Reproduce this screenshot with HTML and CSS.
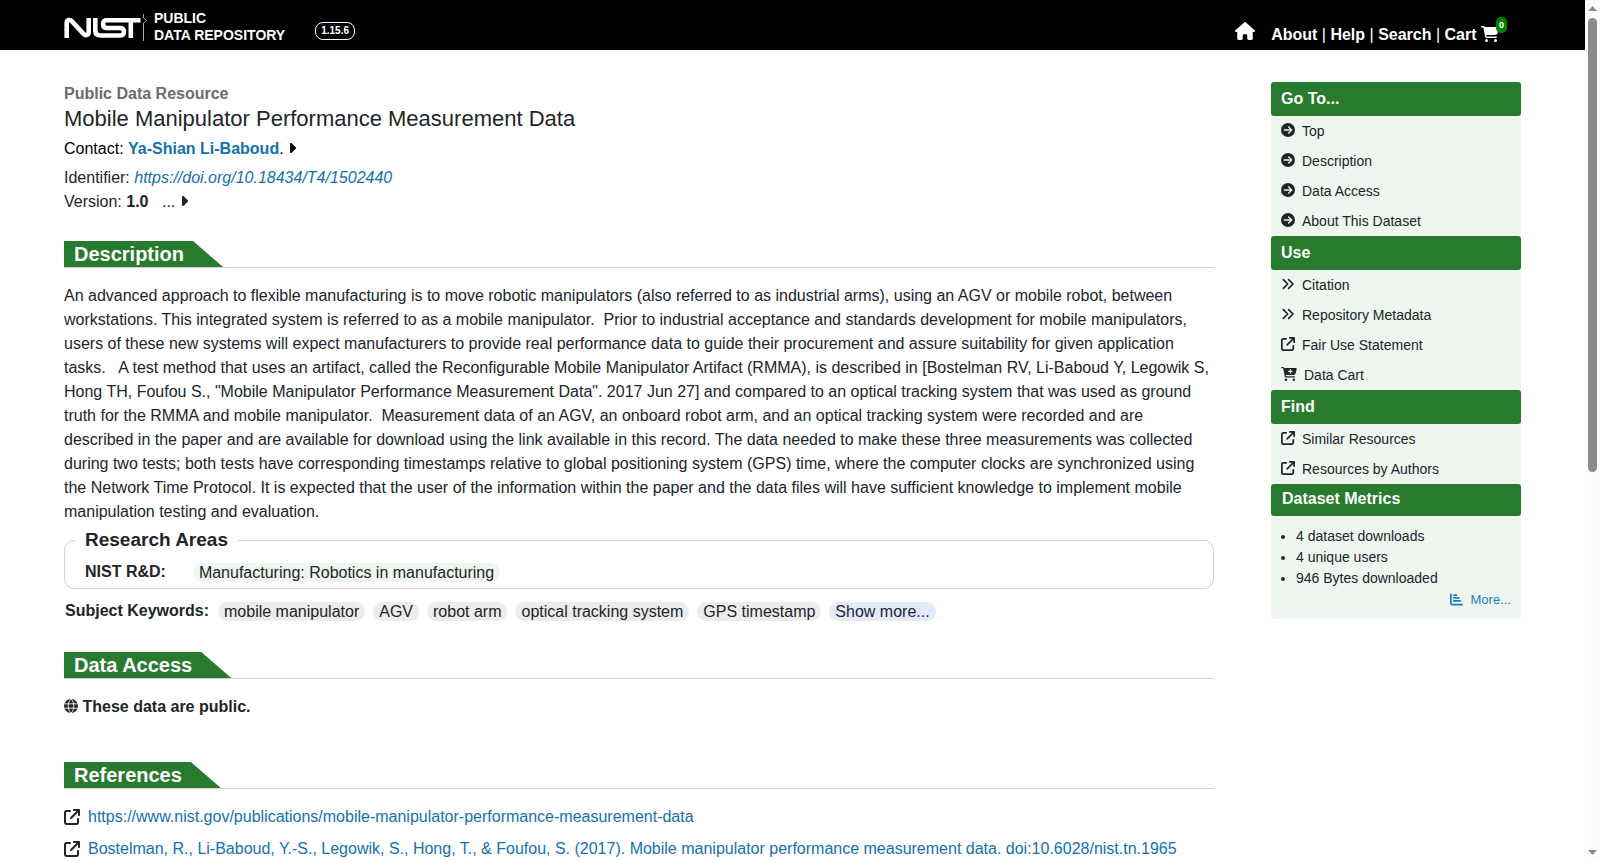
FILE: index.html
```
<!DOCTYPE html>
<html lang="en">
<head>
  <meta charset="UTF-8">
  <meta name="viewport" content="width=device-width, initial-scale=1.0">
  <title>Mobile Manipulator Performance Measurement Data</title>
  <link rel="stylesheet" href="styles.css">
</head>
<body>
  <!-- shared icons -->
  <svg class="icon-defs" aria-hidden="true">
    <symbol id="i-home" viewBox="0 0 576 512"><path d="M575.8 255.5c0 18-15 32.1-32 32.1h-32l.7 160.2c0 2.700-.2 5.400-.5 8.100V472c0 22.100-17.900 40-40 40H392c-22.100 0-40-17.900-40-40V384c0-17.700-14.300-32-32-32H256c-17.700 0-32 14.300-32 32v88c0 22.100-17.900 40-40 40H104c-22.100 0-40-17.900-40-40V287.600H32c-18 0-32-14-32-32.100c0-9 3-17 10-24L266.400 8c7-7 15-8 22-8s15 2 21 7L564.800 231.500c8 7 12 15 11 24z"/></symbol>
    <symbol id="i-cart" viewBox="0 0 576 512"><path d="M0 24C0 10.7 10.7 0 24 0H69.5c22 0 41.5 12.8 50.6 32h411c26.3 0 45.5 25 38.6 50.4l-41 152.3c-8.5 31.4-37 53.3-69.5 53.3H170.7l5.4 28.5c2.2 11.3 12.1 19.5 23.6 19.5H488c13.3 0 24 10.7 24 24s-10.7 24-24 24H199.7c-34.6 0-64.3-24.6-70.7-58.5L77.4 54.5c-.7-3.8-4-6.5-7.9-6.5H24C10.7 48 0 37.3 0 24zM128 464a48 48 0 1 1 96 0 48 48 0 1 1 -96 0zm336-48a48 48 0 1 1 0 96 48 48 0 1 1 0-96z"/></symbol>
    <symbol id="i-cart-plus" viewBox="0 0 576 512"><path fill-rule="evenodd" d="M0 24C0 10.7 10.7 0 24 0H69.5c22 0 41.5 12.8 50.6 32h411c26.3 0 45.5 25 38.6 50.4l-41 152.3c-8.5 31.4-37 53.3-69.5 53.3H170.7l5.4 28.5c2.2 11.3 12.1 19.5 23.6 19.5H488c13.3 0 24 10.7 24 24s-10.7 24-24 24H199.7c-34.6 0-64.3-24.6-70.7-58.5L77.4 54.5c-.7-3.8-4-6.5-7.9-6.5H24C10.7 48 0 37.3 0 24zM128 464a48 48 0 1 1 96 0 48 48 0 1 1 -96 0zm336-48a48 48 0 1 1 0 96 48 48 0 1 1 0-96zM252 160c0 11 9 20 20 20h44v44c0 11 9 20 20 20s20-9 20-20V180h44c11 0 20-9 20-20s-9-20-20-20H356V96c0-11-9-20-20-20s-20 9-20 20v44H272c-11 0-20 9-20 20z"/></symbol>
    <symbol id="i-arrow" viewBox="0 0 512 512"><path fill-rule="evenodd" d="M0 256a256 256 0 1 0 512 0A256 256 0 1 0 0 256zM297 385c-9.4 9.4-24.6 9.4-33.9 0s-9.4-24.6 0-33.9l71-71L120 280c-13.3 0-24-10.7-24-24s10.7-24 24-24l214.1 0-71-71c-9.4-9.4-9.4-24.6 0-33.9s24.6-9.4 33.9 0L409 239c9.4 9.4 9.4 24.6 0 33.9L297 385z"/></symbol>
    <symbol id="i-angles" viewBox="0 0 512 512"><path fill="none" stroke="currentColor" stroke-width="64" stroke-linecap="round" stroke-linejoin="round" d="M86 96l160 160L86 416M278 96l160 160-160 160"/></symbol>
    <symbol id="i-external" viewBox="0 0 512 512"><path d="M320 0c-17.7 0-32 14.3-32 32s14.3 32 32 32h82.7L201.4 265.4c-12.5 12.5-12.5 32.8 0 45.3s32.8 12.5 45.3 0L448 109.3V192c0 17.7 14.3 32 32 32s32-14.3 32-32V32c0-17.7-14.3-32-32-32H320zM80 32C35.8 32 0 67.8 0 112V432c0 44.2 35.8 80 80 80H400c44.2 0 80-35.8 80-80V320c0-17.7-14.3-32-32-32s-32 14.3-32 32V432c0 8.8-7.2 16-16 16H80c-8.8 0-16-7.2-16-16V112c0-8.8 7.2-16 16-16H192c17.7 0 32-14.3 32-32s-14.3-32-32-32H80z"/></symbol>
    <symbol id="i-caret" viewBox="0 0 256 512"><path d="M246.6 278.6c12.5-12.5 12.5-32.8 0-45.3l-128-128c-9.2-9.2-22.9-11.9-34.9-6.9s-19.8 16.6-19.8 29.6l0 256c0 12.9 7.8 24.6 19.8 29.6s25.7 2.2 34.9-6.9l128-128z"/></symbol>
    <symbol id="i-globe" viewBox="0 0 512 512"><circle cx="256" cy="256" r="256"/><path fill="none" stroke="#fff" stroke-width="32" d="M10 176h492M10 336h492M256 0C120 110 120 402 256 512M256 0c136 110 136 402 0 512"/></symbol>
    <symbol id="i-chart" viewBox="0 0 512 512"><path fill="none" stroke="currentColor" stroke-width="68" stroke-linecap="round" stroke-linejoin="round" d="M34 50v354q0 56 56 56h388M150 80h104M150 196h196M150 312h256"/></symbol>
  </svg>

  <div class="page">
    <header class="topbar">
      <a class="brand" href="#top" aria-label="NIST Public Data Repository">
        <svg class="logo" viewBox="0 0 84 28" aria-hidden="true">
          <g fill="none" stroke="#fff" stroke-width="4.600">
            <path d="M2.700 25V10C2.700 6.500 6 6.200 8 8.300L19.500 20.800C22 23.300 24.700 22 24.700 19V5"/>
            <path d="M31.300 5V17.500Q31.300 22.500 36.500 22.500H55.500Q60 22.500 60 18.700T55.500 15H43Q39 15 39 11T43 7.200H76.500M66.800 7.200V25"/>
          </g>
          <path fill="none" stroke="#aaa" d="M79.500 1V5L82.500 7.500L79.500 10V28"/>
        </svg>
        <span class="brand-text">PUBLIC<br>DATA REPOSITORY</span>
      </a>
      <span class="version">1.15.6</span>
      <nav class="topnav">
        <a class="home" href="#home" aria-label="Home"><svg class="icon"><use href="#i-home"/></svg></a>
        <a href="#about">About</a> | <a href="#help">Help</a> | <a href="#search">Search</a> |
        <a class="cart" href="#cart">Cart <svg class="icon"><use href="#i-cart"/></svg><span class="badge">0</span></a>
      </nav>
    </header>

    <div class="content" id="top">
      <main class="main">
        <div class="kind">Public Data Resource</div>
        <h1>Mobile Manipulator Performance Measurement Data</h1>
        <div class="contact">Contact: <a href="#contact"><b>Ya-Shian Li-Baboud</b></a>. <button class="expand" aria-label="Show contact details"><svg class="icon caret"><use href="#i-caret"/></svg></button></div>
        <div>Identifier: <a href="#doi"><i>https://doi.org/10.18434/T4/1502440</i></a></div>
        <div>Version: <b>1.0</b> <span class="more-versions">...</span> <button class="expand" aria-label="Show version history"><svg class="icon caret"><use href="#i-caret"/></svg></button></div>

        <section id="description">
          <div class="section-head"><h2>Description</h2></div>
          <p class="abstract">An advanced approach to flexible manufacturing is to move robotic manipulators (also referred to as industrial arms), using an AGV or mobile robot, between workstations. This integrated system is referred to as a mobile manipulator.&nbsp; Prior to industrial acceptance and standards development for mobile manipulators, users of these new systems will expect manufacturers to provide real performance data to guide their procurement and assure suitability for given application tasks.&nbsp;&nbsp; A test method that uses an artifact, called the Reconfigurable Mobile Manipulator Artifact (RMMA), is described in [Bostelman RV, Li-Baboud Y, Legowik S, Hong TH, Foufou S., "Mobile Manipulator Performance Measurement Data". 2017 Jun 27] and compared to an optical tracking system that was used as ground truth for the RMMA and mobile manipulator.&nbsp; Measurement data of an AGV, an onboard robot arm, and an optical tracking system were recorded and are described in the paper and are available for download using the link available in this record. The data needed to make these three measurements was collected during two tests; both tests have corresponding timestamps relative to global positioning system (GPS) time, where the computer clocks are synchronized using the Network Time Protocol. It is expected that the user of the information within the paper and the data files will have sufficient knowledge to implement mobile manipulation testing and evaluation.</p>
          <fieldset class="areas">
            <legend>Research Areas</legend>
            <b>NIST R&amp;D:</b>
            <span class="tag topic">Manufacturing: Robotics in manufacturing</span>
          </fieldset>
          <div class="keywords">
            <b>Subject Keywords:</b>
            <span class="tag">mobile manipulator</span>
            <span class="tag">AGV</span>
            <span class="tag">robot arm</span>
            <span class="tag">optical tracking system</span>
            <span class="tag">GPS timestamp</span>
            <button class="tag show-more">Show more...</button>
          </div>
        </section>

        <section id="access">
          <div class="section-head"><h2>Data Access</h2></div>
          <p class="public"><svg class="icon"><use href="#i-globe"/></svg> <b>These data are public.</b></p>
        </section>

        <section id="references">
          <div class="section-head"><h2>References</h2></div>
          <ul class="refs">
            <li><svg class="icon"><use href="#i-external"/></svg><a href="#ref1">https://www.nist.gov/publications/mobile-manipulator-performance-measurement-data</a></li>
            <li><svg class="icon"><use href="#i-external"/></svg><a href="#ref2">Bostelman, R., Li-Baboud, Y.-S., Legowik, S., Hong, T., &amp; Foufou, S. (2017). Mobile manipulator performance measurement data. doi:10.6028/nist.tn.1965</a></li>
          </ul>
        </section>
      </main>

      <aside class="sidebar">
        <h3>Go To...</h3>
        <ul class="menu">
          <li><a href="#top"><svg class="icon"><use href="#i-arrow"/></svg>Top</a></li>
          <li><a href="#description"><svg class="icon"><use href="#i-arrow"/></svg>Description</a></li>
          <li><a href="#access"><svg class="icon"><use href="#i-arrow"/></svg>Data Access</a></li>
          <li><a href="#about"><svg class="icon"><use href="#i-arrow"/></svg>About This Dataset</a></li>
        </ul>
        <h3>Use</h3>
        <ul class="menu">
          <li><a href="#citation"><svg class="icon"><use href="#i-angles"/></svg>Citation</a></li>
          <li><a href="#metadata"><svg class="icon"><use href="#i-angles"/></svg>Repository Metadata</a></li>
          <li><a href="#fairuse"><svg class="icon"><use href="#i-external"/></svg>Fair Use Statement</a></li>
          <li><a href="#datacart"><svg class="icon wide"><use href="#i-cart-plus"/></svg>Data Cart</a></li>
        </ul>
        <h3>Find</h3>
        <ul class="menu">
          <li><a href="#similar"><svg class="icon"><use href="#i-external"/></svg>Similar Resources</a></li>
          <li><a href="#authors"><svg class="icon"><use href="#i-external"/></svg>Resources by Authors</a></li>
        </ul>
        <h3 class="metrics-head">Dataset Metrics</h3>
        <div class="metrics">
          <ul>
            <li>4 dataset downloads</li>
            <li>4 unique users</li>
            <li>946 Bytes downloaded</li>
          </ul>
          <a class="more" href="#metrics"><svg class="icon"><use href="#i-chart"/></svg>More...</a>
        </div>
      </aside>
    </div>
  </div>

  <div class="scrollbar" aria-hidden="true">
    <svg class="scroll-arrow" viewBox="0 0 9 5"><path d="M0 5L4.500 0L9 5z"/></svg>
    <div class="scroll-track"><div class="scroll-thumb"></div></div>
    <svg class="scroll-arrow" viewBox="0 0 9 5"><path d="M0 0L4.500 5L9 0z"/></svg>
  </div>
</body>
</html>
```
FILE: styles.css
```
* {
  box-sizing: border-box;
}

body {
  display: flex;
  height: 100vh;
  margin: 0;
  overflow: hidden;
  background: #fff;
  color: #212529;
  font-family: "Liberation Sans", Arial, sans-serif;
  font-size: 16px;
  line-height: 24px;
}

a {
  color: #1471ae;
  text-decoration: none;
}

ul {
  margin: 0;
  padding: 0;
  list-style: none;
}

button {
  padding: 0;
  border: 0;
  background: none;
  color: inherit;
  font: inherit;
  cursor: pointer;
}

.icon-defs {
  display: none;
}

.icon {
  width: 14px;
  height: 14px;
  fill: currentColor;
}

.page {
  flex: 1;
  min-width: 0;
  overflow: hidden;
}

/* header */
.topbar {
  display: flex;
  align-items: flex-start;
  height: 50px;
  padding: 0 86px 0 64px;
  background: #000;
  color: #fff;
}

.topbar a {
  color: #fff;
}

.brand {
  display: flex;
  gap: 6px;
  padding-top: 10px;
}

.logo {
  width: 84px;
  height: 28px;
  margin-top: 3px;
}

.brand-text {
  font-size: 14px;
  font-weight: bold;
  line-height: 17px;
}

.version {
  margin: 22px 0 0 30px;
  padding: 0 5px;
  border: 1px solid #fff;
  border-radius: 8px;
  font-size: 10px;
  font-weight: bold;
  line-height: 16px;
}

.topnav {
  margin-left: auto;
  padding-top: 22px;
}

.topnav a {
  font-weight: bold;
}

.home {
  margin-right: 12px;
}

.home .icon {
  width: 20px;
  height: 18px;
}

.cart {
  position: relative;
}

.cart .icon {
  width: 18px;
  height: 16px;
  vertical-align: -2px;
}

.badge {
  position: absolute;
  top: -9px;
  right: -8px;
  padding: 0 3px;
  border-radius: 5px;
  background: #008000;
  font-size: 9px;
  line-height: 16px;
}

/* layout */
.content {
  display: flex;
  align-items: flex-start;
  gap: 57px;
  padding: 32px 64px 0;
}

.main {
  flex: 1;
  min-width: 0;
}

.kind {
  color: #6c6c6c;
  font-weight: bold;
}

h1 {
  margin: 0;
  font-size: 22px;
  font-weight: normal;
  line-height: 26px;
}

.contact {
  margin: 5px 0;
  color: #000;
}

.caret {
  width: 8px;
  height: 16px;
  vertical-align: -2px;
}

.more-versions {
  margin-left: 9px;
}

/* sections */
.section-head {
  display: flex;
  border-bottom: 1px solid #d0d0d0;
}

.section-head h2 {
  margin: 0;
  padding: 0 39px 0 10px;
  background: #277a2e;
  clip-path: polygon(0 0, calc(100% - 30px) 0, 100% 100%, 0 100%);
  color: #fff;
  font-size: 20px;
  line-height: 26px;
}

#description {
  margin-top: 27px;
}

.abstract {
  margin: 16px 0 4px;
}

.areas {
  display: flex;
  align-items: center;
  gap: 27px;
  margin: 0;
  padding: 8px 20px 4px;
  border: 1px solid #d0d0d0;
  border-radius: 10px;
}

.areas legend {
  margin-left: -10px;
  padding: 0 10px;
  font-size: 19px;
  font-weight: bold;
}

.tag {
  padding: 0 6px;
  border-radius: 10px;
  background: #ececec;
  line-height: 19px;
}

.topic {
  background: #eff6f0;
}

.keywords {
  display: flex;
  align-items: center;
  gap: 8px;
  margin: 10px 0 0 1px;
}

.keywords b {
  margin-right: 1px;
}

.show-more {
  background: #e4eafe;
}

#access {
  margin-top: 29px;
}

.public {
  margin: 16px 0 43px;
}

.public .icon {
  vertical-align: -1px;
}

.refs {
  padding-top: 12px;
}

.refs li {
  display: flex;
  align-items: center;
  gap: 8px;
  height: 32px;
}

.refs .icon {
  width: 16px;
  height: 16px;
}

/* sidebar */
.sidebar {
  flex: 0 0 250px;
  background: #eff6f0;
  font-size: 14px;
}

.sidebar h3 {
  margin: 0;
  padding: 0 10px;
  border-radius: 3px;
  background: #277a2e;
  color: #fff;
  font-size: 16px;
  line-height: 34px;
}

.sidebar .metrics-head {
  padding: 0 11px 2px;
  line-height: 30px;
}

.menu a {
  display: flex;
  align-items: center;
  gap: 7px;
  padding-left: 10px;
  color: #212529;
  line-height: 30px;
}

.menu .icon {
  margin-bottom: 2px;
}

.menu .wide {
  width: 16px;
}

.metrics {
  padding: 10px 10px 9px;
}

.metrics ul {
  padding-left: 15px;
  list-style: disc;
  line-height: 21px;
}

.more {
  display: flex;
  align-items: center;
  justify-content: flex-end;
  gap: 8px;
  color: #1a7fc1;
  font-size: 13px;
  line-height: 21px;
}

.more .icon {
  width: 13px;
  height: 13px;
}

/* scrollbar */
.scrollbar {
  display: flex;
  flex: 0 0 15px;
  flex-direction: column;
  align-items: center;
  gap: 7px;
  padding: 6px 0;
  background: #fcfcfc;
}

.scroll-arrow {
  width: 9px;
  height: 5px;
  fill: #8b8b8b;
}

.scroll-track {
  flex: 1;
}

.scroll-thumb {
  width: 9px;
  height: 55%;
  border-radius: 5px;
  background: #8b8b8b;
}
```
